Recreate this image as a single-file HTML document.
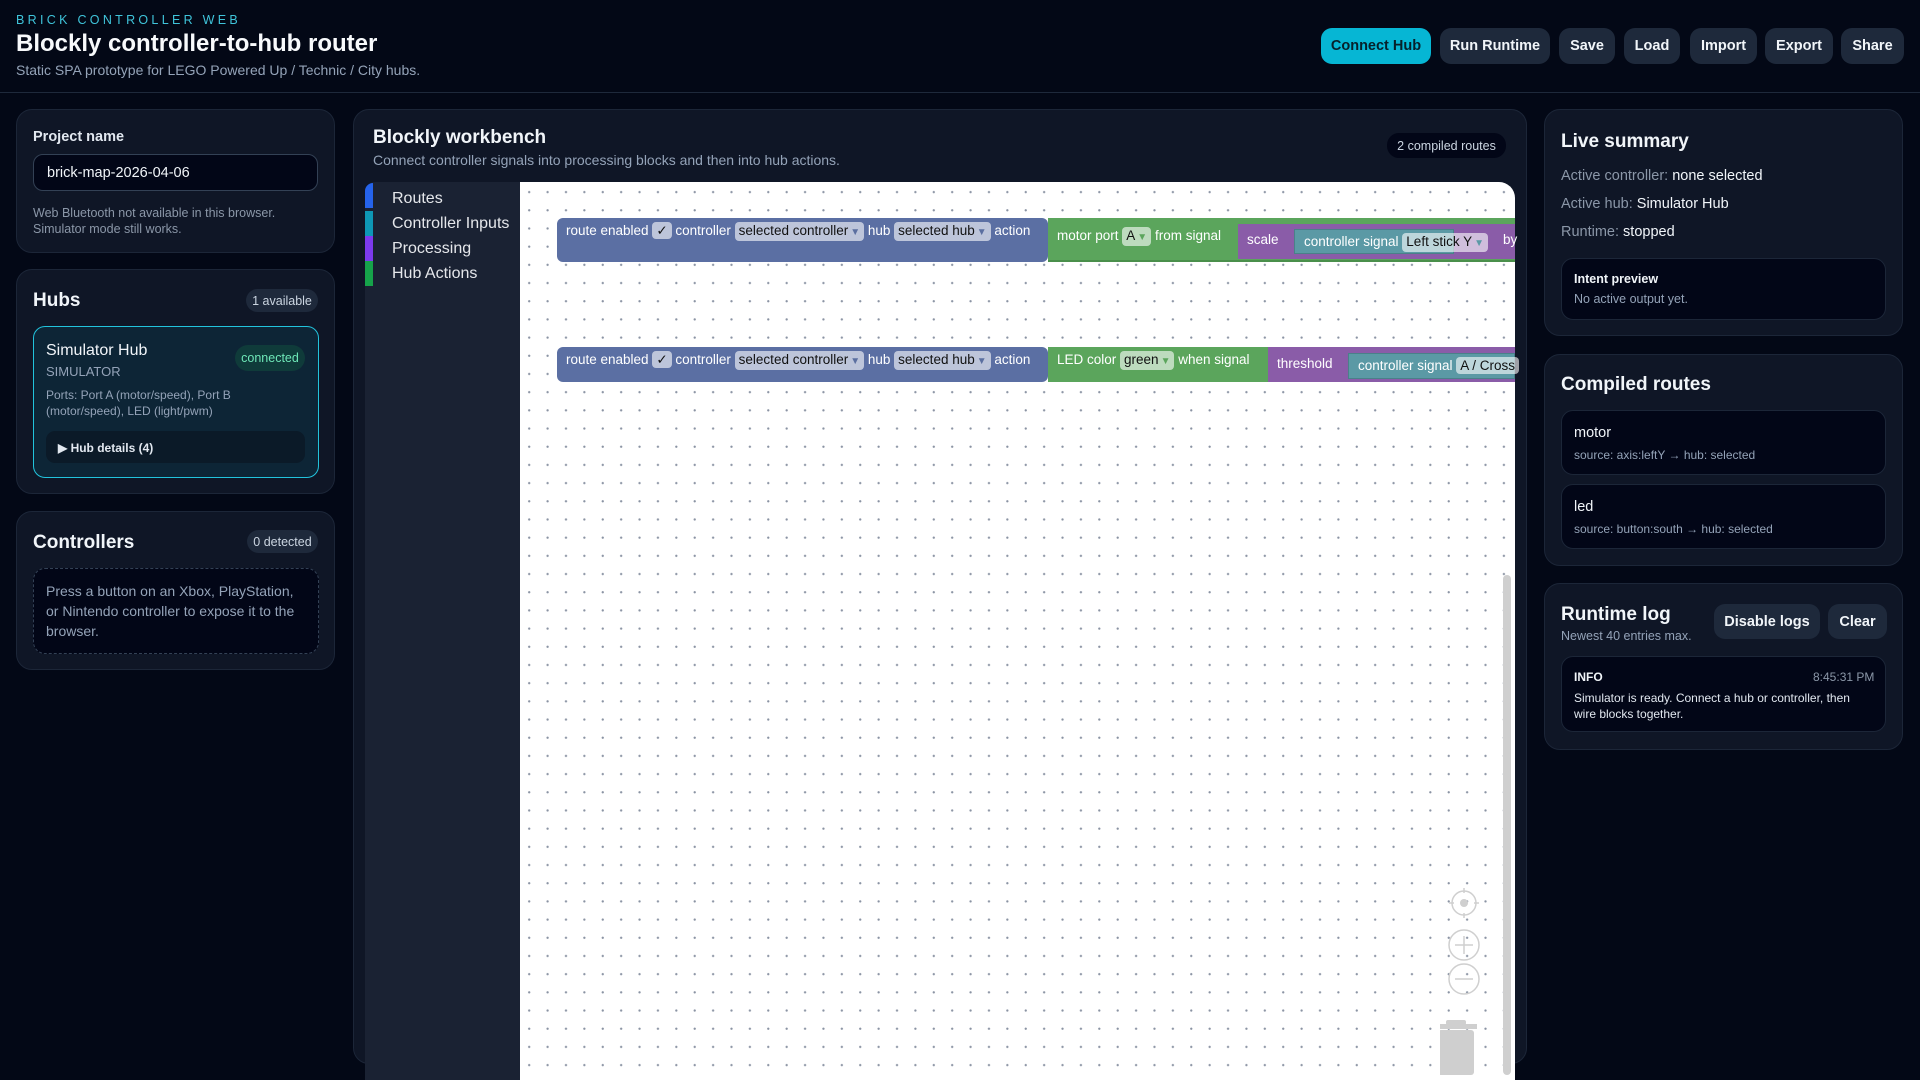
<!DOCTYPE html>
<html><head><meta charset="utf-8"><style>
*{box-sizing:border-box;margin:0;padding:0}
body{width:1920px;height:1080px;overflow:hidden;background:#030816;font-family:"Liberation Sans",sans-serif;color:#e5e7eb;position:relative}
.a{position:absolute}
.panel{position:absolute;background:#0f1626;border:1px solid #1c2638;border-radius:16px}
.btn{position:absolute;top:28px;height:36px;border-radius:11px;background:#1e293b;color:#f1f5f9;font-weight:bold;font-size:14.5px;display:flex;align-items:center;justify-content:center}
.badge{position:absolute;height:23px;border-radius:12px;background:#1e293b;color:#cbd5e1;font-size:12.5px;display:flex;align-items:center;justify-content:center}
.h2{position:absolute;font-weight:bold;font-size:19px;color:#f1f5f9}
.box{position:absolute;background:#020617;border:1px solid #1c2638;border-radius:12px}
.muted{color:#8b97a8}
.blk{position:absolute;color:#fff;font-size:13.5px;white-space:nowrap}
.f{display:inline-block;background:rgba(255,255,255,.6);color:#111;border-radius:4px;padding:0 4px;line-height:17px}
.f i{font-style:normal;color:#5b6fa0;font-size:10px;margin-left:2px}
</style></head><body>
<div class="a" style="left:16px;top:13px;font-size:12.5px;letter-spacing:3.3px;color:#3fc4da">BRICK CONTROLLER WEB</div>
<div class="a" style="left:16px;top:30px;font-size:24px;font-weight:bold;color:#f8fafc">Blockly controller-to-hub router</div>
<div class="a" style="left:16px;top:62px;font-size:14px;color:#94a3b8">Static SPA prototype for LEGO Powered Up / Technic / City hubs.</div>
<div class="btn" style="left:1321px;width:110px;background:#06b6d4;color:#06202a">Connect Hub</div>
<div class="btn" style="left:1440px;width:110px">Run Runtime</div>
<div class="btn" style="left:1559px;width:56px">Save</div>
<div class="btn" style="left:1624px;width:56px">Load</div>
<div class="btn" style="left:1690px;width:67px">Import</div>
<div class="btn" style="left:1765px;width:68px">Export</div>
<div class="btn" style="left:1841px;width:63px">Share</div>
<div class="a" style="left:0;top:92px;width:1920px;height:1px;background:#1e293b"></div>

<!-- left -->
<div class="panel" style="left:16px;top:109px;width:319px;height:144px"></div>
<div class="a" style="left:33px;top:129px;font-weight:bold;font-size:14.5px;color:#e2e8f0">Project name</div>
<div class="box" style="left:33px;top:154px;width:285px;height:37px;border-color:#334155;border-radius:10px;font-size:14.5px;color:#f1f5f9;padding:10px 13px">brick-map-2026-04-06</div>
<div class="a muted" style="left:33px;top:205px;font-size:12.5px;line-height:16px">Web Bluetooth not available in this browser.<br>Simulator mode still works.</div>

<div class="panel" style="left:16px;top:269px;width:319px;height:225px"></div>
<div class="h2" style="left:33px;top:290px">Hubs</div>
<div class="badge" style="left:246px;top:289px;width:72px">1 available</div>
<div class="a" style="left:33px;top:326px;width:286px;height:152px;border:1px solid #22c3dc;border-radius:12px;background:#0d2536"></div>
<div class="a" style="left:46px;top:342px;font-size:16px;color:#f1f5f9">Simulator Hub</div>
<div class="a" style="left:46px;top:364px;font-size:13px;color:#94a3b8">SIMULATOR</div>
<div class="a" style="left:235px;top:345px;width:70px;height:26px;border-radius:13px;background:#0f3b3a;color:#6ee7b7;font-size:12.5px;display:flex;align-items:center;justify-content:center">connected</div>
<div class="a" style="left:46px;top:387px;font-size:12px;line-height:16px;color:#94a3b8">Ports: Port A (motor/speed), Port B<br>(motor/speed), LED (light/pwm)</div>
<div class="a" style="left:46px;top:431px;width:259px;height:32px;border-radius:9px;background:#0b1a28;font-size:12px;font-weight:bold;color:#e2e8f0;padding:10px 12px">▶ Hub details (4)</div>

<div class="panel" style="left:16px;top:511px;width:319px;height:159px"></div>
<div class="h2" style="left:33px;top:532px">Controllers</div>
<div class="badge" style="left:247px;top:530px;width:71px">0 detected</div>
<div class="a" style="left:33px;top:568px;width:286px;height:86px;border:1px dashed #334155;border-radius:12px;background:#020617;color:#94a3b8;font-size:14px;line-height:20px;padding:12px 12px">Press a button on an Xbox, PlayStation, or Nintendo controller to expose it to the browser.</div>

<!-- middle -->
<div class="panel" style="left:353px;top:109px;width:1174px;height:955px"></div>
<div class="a" style="left:373px;top:127px;font-weight:bold;font-size:19px;color:#f1f5f9">Blockly workbench</div>
<div class="a muted" style="left:373px;top:152px;font-size:14px;color:#94a3b8">Connect controller signals into processing blocks and then into hub actions.</div>
<div class="badge" style="left:1387px;top:133px;width:119px;height:25px;background:#020617;color:#cbd5e1">2 compiled routes</div>

<div class="a" style="left:365px;top:182px;width:155px;height:898px;background:#1a2233;border-top-left-radius:10px"></div>
<div class="a" style="left:365px;top:183px;width:8px;height:25px;background:#2563eb;border-top-left-radius:8px"></div>
<div class="a" style="left:365px;top:211px;width:8px;height:25px;background:#0e97b5"></div>
<div class="a" style="left:365px;top:236px;width:8px;height:25px;background:#7c3aed"></div>
<div class="a" style="left:365px;top:261px;width:8px;height:25px;background:#16a34a"></div>
<div class="a" style="left:392px;top:186px;font-size:16px;line-height:25px;color:#e5e7eb">Routes<br>Controller Inputs<br>Processing<br>Hub Actions</div>

<div class="a" style="left:520px;top:182px;width:995px;height:898px;background-color:#fff;border-top-right-radius:16px;background-image:radial-gradient(circle,#8a93a3 0.9px,transparent 1.4px);background-size:18.4px 18.2px;background-position:0px 1px"></div>
<div class="a" style="left:1503px;top:575px;width:8px;height:500px;border-radius:4px;background:#cfcfcf"></div>

<!-- row 1 -->
<div class="a" style="left:557px;top:218px;width:491px;height:44px;background:#5b6fa3;border-radius:6px"></div>
<div class="a" style="left:1048px;top:218px;width:467px;height:44px;background:#5ba55c;border-bottom:2px solid #4a8f4b"></div>
<div class="a" style="left:1238px;top:224px;width:277px;height:35px;background:#8a5ca8"></div>
<div class="a" style="left:1294px;top:229px;width:160px;height:25px;background:#5b99a5;border:1px solid #4a8089"></div>
<div class="blk" style="left:566px;top:222px">route enabled <span class="f">✓</span> controller <span class="f">selected controller<i>▼</i></span> hub <span class="f">selected hub<i>▼</i></span> action</div>
<div class="blk" style="left:1057px;top:227px">motor port <span class="f">A<i style="color:#5ba55c">▼</i></span> from signal</div>
<div class="blk" style="left:1247px;top:232px">scale</div>
<div class="blk" style="left:1304px;top:233px">controller signal <span class="f">Left stick Y<i style="color:#5b99a5">▼</i></span></div>
<div class="blk" style="left:1503px;top:232px">by</div>

<!-- row 2 -->
<div class="a" style="left:557px;top:347px;width:491px;height:35px;background:#5b6fa3;border-radius:6px"></div>
<div class="a" style="left:1048px;top:347px;width:220px;height:35px;background:#5ba55c"></div>
<div class="a" style="left:1268px;top:347px;width:247px;height:35px;background:#8a5ca8"></div>
<div class="a" style="left:1348px;top:353px;width:167px;height:26px;background:#5b99a5;border:1px solid #4a8089"></div>
<div class="blk" style="left:566px;top:351px">route enabled <span class="f">✓</span> controller <span class="f">selected controller<i>▼</i></span> hub <span class="f">selected hub<i>▼</i></span> action</div>
<div class="blk" style="left:1057px;top:351px">LED color <span class="f">green<i style="color:#5ba55c">▼</i></span> when signal</div>
<div class="blk" style="left:1277px;top:356px">threshold</div>
<div class="blk" style="left:1358px;top:357px">controller signal <span class="f">A / Cross</span></div>

<!-- controls -->
<svg class="a" style="left:1440px;top:880px" width="50" height="200" viewBox="0 0 50 200">
<g fill="none" stroke="#cfcfcf" stroke-width="1.5">
<circle cx="24" cy="23" r="12"/><path d="M24 8v5M24 33v5M9 23h5M34 23h5"/>
<circle cx="24" cy="65" r="15"/><path d="M24 56v18M15 65h18"/>
<circle cx="24" cy="99" r="15"/><path d="M15 99h18"/>
</g>
<circle cx="24" cy="23" r="4" fill="#cfcfcf"/>
<rect x="-5" y="144" width="42" height="5" fill="#cfcfcf"/><rect x="6" y="140" width="20" height="5" rx="2" fill="#cfcfcf"/>
<rect x="-2" y="150" width="36" height="45" rx="3" fill="#cfcfcf"/>
</svg>

<!-- right -->
<div class="panel" style="left:1544px;top:109px;width:359px;height:227px"></div>
<div class="h2" style="left:1561px;top:131px">Live summary</div>
<div class="a" style="left:1561px;top:162px;font-size:14.5px;line-height:28px;color:#f1f5f9"><span class="muted">Active controller:</span> none selected<br><span class="muted">Active hub:</span> Simulator Hub<br><span class="muted">Runtime:</span> stopped</div>
<div class="box" style="left:1561px;top:258px;width:325px;height:62px"></div>
<div class="a" style="left:1574px;top:272px;font-size:12.5px;font-weight:bold;color:#f1f5f9">Intent preview</div>
<div class="a" style="left:1574px;top:292px;font-size:12.5px;color:#94a3b8">No active output yet.</div>

<div class="panel" style="left:1544px;top:354px;width:359px;height:212px"></div>
<div class="h2" style="left:1561px;top:374px">Compiled routes</div>
<div class="box" style="left:1561px;top:410px;width:325px;height:65px"></div>
<div class="a" style="left:1574px;top:425px;font-size:14.5px;color:#f1f5f9">motor</div>
<div class="a" style="left:1574px;top:448px;font-size:12px;color:#94a3b8">source: axis:leftY → hub: selected</div>
<div class="box" style="left:1561px;top:484px;width:325px;height:65px"></div>
<div class="a" style="left:1574px;top:499px;font-size:14.5px;color:#f1f5f9">led</div>
<div class="a" style="left:1574px;top:522px;font-size:12px;color:#94a3b8">source: button:south → hub: selected</div>

<div class="panel" style="left:1544px;top:583px;width:359px;height:167px"></div>
<div class="h2" style="left:1561px;top:604px">Runtime log</div>
<div class="a" style="left:1561px;top:629px;font-size:12.5px;color:#94a3b8">Newest 40 entries max.</div>
<div class="btn" style="left:1714px;top:604px;width:106px;height:35px">Disable logs</div>
<div class="btn" style="left:1828px;top:604px;width:59px;height:35px">Clear</div>
<div class="box" style="left:1561px;top:656px;width:325px;height:76px"></div>
<div class="a" style="left:1574px;top:670px;font-size:12px;font-weight:bold;color:#f1f5f9">INFO</div>
<div class="a" style="left:1813px;top:670px;font-size:12px;color:#8b97a8">8:45:31 PM</div>
<div class="a" style="left:1574px;top:690px;font-size:12px;line-height:16px;color:#e2e8f0">Simulator is ready. Connect a hub or controller, then<br>wire blocks together.</div>
</body></html>
